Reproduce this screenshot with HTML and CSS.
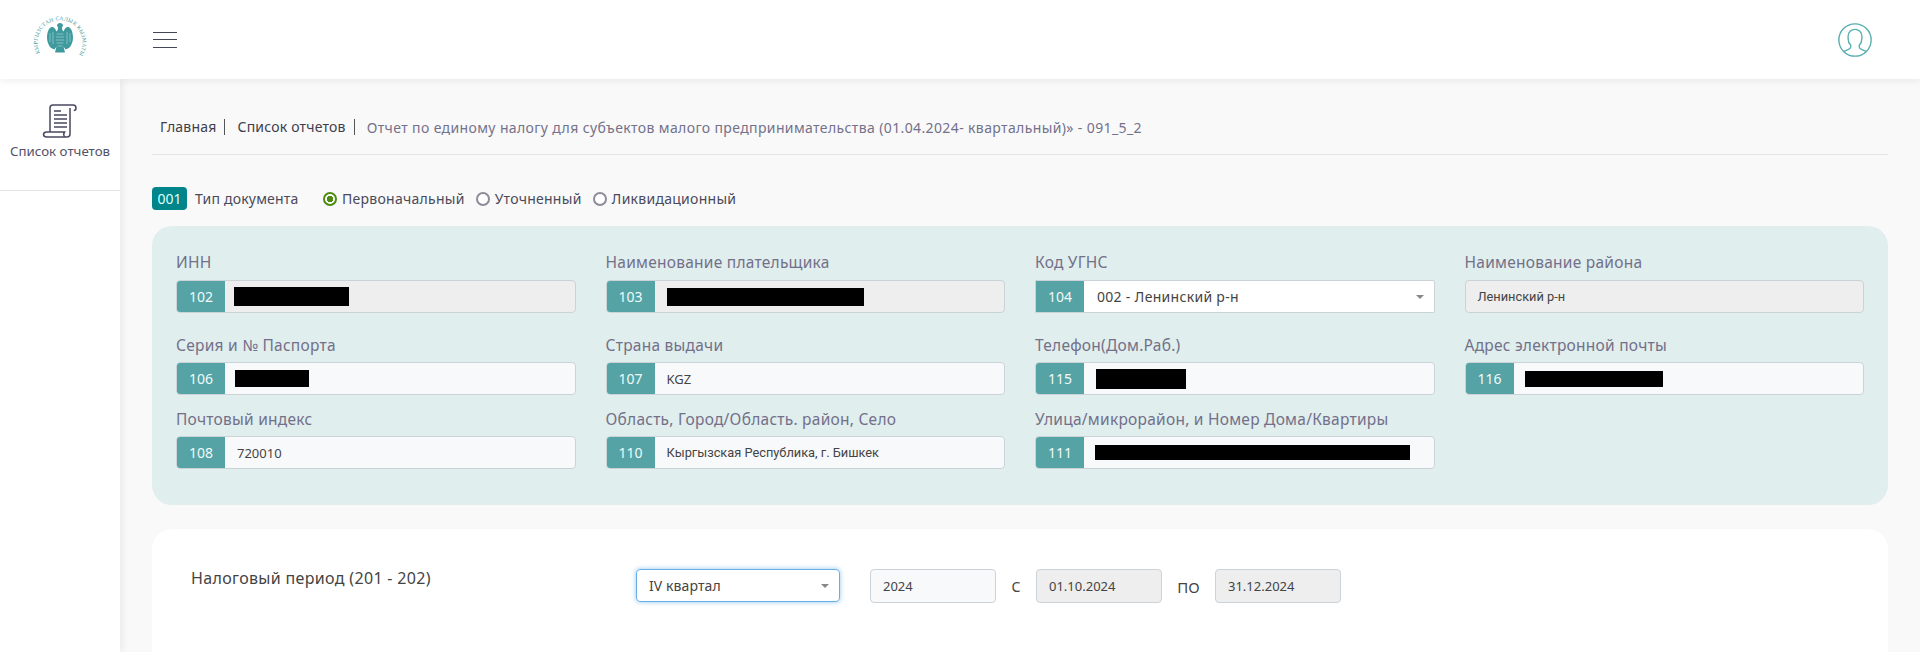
FILE: index.html
```html
<!DOCTYPE html>
<html lang="ru">
<head>
    <meta charset="UTF-8">
    <meta name="viewport" content="width=device-width, initial-scale=1.0">
    <title>Список отчетов</title>
    <link rel="stylesheet" href="styles.css">
</head>
<body>
    <header class="topbar">
        <svg class="logo" viewBox="0 0 60 60" aria-label="Кыргызстан салык кызматы">
            <defs><path id="logo-arc" d="M10 43A22.500 22.500 0 1 1 50 43"/></defs>
            <text class="logo-text"><textPath href="#logo-arc" textLength="94" lengthAdjust="spacing">КЫРГЫЗСТАН САЛЫК КЫЗМАТЫ</textPath></text>
            <path class="logo-eagle" d="M30 13c1.500 0 3 1 3 2.500l-1 2c0 2 .5 3 1.500 4 1-3 3-5 5-4.500 3 1 4.500 6 4.500 11 0 4-2 8-4 10l-3.500 1.500-2-3 1.500 6h-10l1.500-6-2 3-3.500-1.500c-2-2-4-6-4-10 0-5 1.500-10 4.500-11 2-.5 4 1.500 5 4.500 1-1 1.500-2 1.500-4l-1-2c0-1.500 1.500-2.500 3-2.500z"/>
            <path class="logo-lines" d="M26.500 24h7M26 27h8M26 30h8M26.500 33h7M27.500 36h5M20 23v9M23 22v12M37 22v12M40 23v9"/>
        </svg>
        <button class="menu-btn" type="button" aria-label="Меню">
            <span></span><span></span><span></span>
        </button>
        <svg class="user-icon" viewBox="0 0 32 32" aria-label="Профиль">
            <circle cx="16" cy="16" r="15.200"/>
            <path d="M5 27l4.500-2c1.500-.6 2.500-1.200 2.500-2.500V21c-1.500-1.500-2.500-3.500-2.500-6.500v-2c0-4 3-6.500 6.500-6.500s6.500 2.500 6.500 6.500v2c0 3-1 5-2.500 6.500v1.500c0 1.300 1 1.900 2.500 2.500l4.500 2"/>
        </svg>
    </header>

    <div class="layout">
        <aside class="sidebar">
            <a class="side-item" href="#">
                <svg class="scroll-icon" viewBox="0 0 36 36">
                    <path d="M8 29V5a3 3 0 0 1 3-3h20a3 3 0 0 1 3 3c0 1.500-1 2.500-2.200 2.500M29 2h2M28 5v26a3 3 0 0 1-3 3H5c-2 0-3.500-1.200-3.500-2.500S3 29 5 29h17.500c-1 1.500-1 3.500.5 5"/>
                    <path d="M12 8h7M12 12h13M12 16h13M12 20h13M12 24h13"/>
                </svg>
                <span>Список отчетов</span>
            </a>
        </aside>

        <main class="main">
            <nav class="crumbs">
                <a href="#">Главная</a>
                <a href="#">Список отчетов</a>
                <span class="crumb-current">Отчет по единому налогу для субъектов малого предпринимательства (01.04.2024- квартальный)» - 091_5_2</span>
            </nav>

            <div class="doc-type">
                <span class="doc-code">001</span>
                <span class="doc-label">Тип документа</span>
                <label class="radio"><i class="radio-dot checked"></i>Первоначальный</label>
                <label class="radio"><i class="radio-dot"></i>Уточненный</label>
                <label class="radio"><i class="radio-dot"></i>Ликвидационный</label>
            </div>

            <section class="panel">
                <div class="panel-row first">
                    <div class="field">
                        <div class="field-label">ИНН</div>
                        <div class="input-group disabled"><span class="code">102</span><span class="value"><i class="redact r102"></i></span></div>
                    </div>
                    <div class="field">
                        <div class="field-label">Наименование плательщика</div>
                        <div class="input-group disabled"><span class="code">103</span><span class="value"><i class="redact r103"></i></span></div>
                    </div>
                    <div class="field">
                        <div class="field-label">Код УГНС</div>
                        <div class="input-group select"><span class="code">104</span><span class="value wide">002 - Ленинский р-н</span><i class="caret"></i></div>
                    </div>
                    <div class="field">
                        <div class="field-label">Наименование района</div>
                        <div class="input-group disabled"><span class="value small">Ленинский р-н</span></div>
                    </div>
                </div>
                <div class="panel-row">
                    <div class="field">
                        <div class="field-label">Серия и № Паспорта</div>
                        <div class="input-group"><span class="code">106</span><span class="value"><i class="redact r106"></i></span></div>
                    </div>
                    <div class="field">
                        <div class="field-label">Страна выдачи</div>
                        <div class="input-group"><span class="code">107</span><span class="value">KGZ</span></div>
                    </div>
                    <div class="field">
                        <div class="field-label">Телефон(Дом.Раб.)</div>
                        <div class="input-group"><span class="code">115</span><span class="value"><i class="redact r115"></i></span></div>
                    </div>
                    <div class="field">
                        <div class="field-label">Адрес электронной почты</div>
                        <div class="input-group"><span class="code">116</span><span class="value"><i class="redact r116"></i></span></div>
                    </div>
                </div>
                <div class="panel-row">
                    <div class="field">
                        <div class="field-label">Почтовый индекс</div>
                        <div class="input-group"><span class="code">108</span><span class="value">720010</span></div>
                    </div>
                    <div class="field">
                        <div class="field-label">Область, Город/Область. район, Село</div>
                        <div class="input-group"><span class="code">110</span><span class="value small">Кыргызская Республика, г. Бишкек</span></div>
                    </div>
                    <div class="field">
                        <div class="field-label">Улица/микрорайон, и Номер Дома/Квартиры</div>
                        <div class="input-group"><span class="code">111</span><span class="value"><i class="redact r111"></i></span></div>
                    </div>
                </div>
            </section>

            <section class="card">
                <div class="period-label">Налоговый период (201 - 202)</div>
                <div class="period-select"><span>IV квартал</span><i class="caret"></i></div>
                <div class="box year">2024</div>
                <span class="sep">С</span>
                <div class="box locked">01.10.2024</div>
                <span class="sep sep-wide">ПО</span>
                <div class="box locked">31.12.2024</div>
            </section>
        </main>
    </div>
</body>
</html>
```

FILE: styles.css
```css
* {
    box-sizing: border-box;
}
html, body {
    height: 100%;
}
body {
    margin: 0;
    overflow: hidden;
    font-family: "Noto Sans", Arial, sans-serif;
    font-size: 14px;
    background-color: #f9f9f9;
    color: #444;
}
a {
    color: inherit;
    text-decoration: none;
}

/* top bar */
.topbar {
    position: relative;
    z-index: 2;
    display: flex;
    align-items: center;
    height: 79px;
    padding: 0 30px;
    background: #fff;
    box-shadow: 0 2px 8px rgba(0, 0, 0, 0.07);
}
.logo {
    width: 60px;
    height: 60px;
}
.logo-text {
    font-family: "Liberation Serif", serif;
    font-size: 5.6px;
    fill: #3f9a9e;
}
.logo-eagle {
    fill: #3f9a9e;
}
.logo-lines {
    fill: none;
    stroke: #9fd0d1;
    stroke-width: 0.7;
}
.menu-btn {
    display: flex;
    flex-direction: column;
    gap: 6.5px;
    width: 24px;
    margin-left: 63px;
    padding: 0;
    border: 0;
    background: none;
}
.menu-btn span {
    display: block;
    height: 1px;
    background: #444756;
}
.user-icon {
    width: 34px;
    height: 34px;
    margin-left: auto;
    margin-right: 18px;
    fill: none;
    stroke: #58aeb0;
    stroke-width: 1.3;
}

.layout {
    display: flex;
    height: calc(100% - 79px);
}

/* sidebar */
.sidebar {
    position: relative;
    z-index: 1;
    flex: 0 0 120px;
    background: #fff;
    box-shadow: 2px 0 8px rgba(0, 0, 0, 0.07);
}
.side-item {
    display: flex;
    flex-direction: column;
    align-items: center;
    height: 112px;
    padding-top: 24px;
    border-bottom: 1px solid #e2e2e6;
    font-size: 13.3px;
    color: #53516a;
}
.scroll-icon {
    width: 36px;
    height: 36px;
    fill: none;
    stroke: #4a4860;
    stroke-width: 1.500;
}
.side-item span {
    margin-top: 3px;
    white-space: nowrap;
}

/* main column */
.main {
    flex: 1;
    min-width: 0;
    padding: 0 32px;
}
.crumbs {
    display: flex;
    align-items: center;
    height: 76px;
    padding: 21px 0 0 8px;
    border-bottom: 1px solid #e3e3e8;
    font-size: 14px;
    color: #3e3e4c;
}
.crumbs a {
    padding-right: 8px;
    margin-right: 12px;
    line-height: 16px;
    letter-spacing: 0.2px;
    border-right: 1px solid #555;
}
.crumb-current {
    color: #74718a;
    letter-spacing: 0.38px;
}

.doc-type {
    display: flex;
    align-items: center;
    height: 23px;
    margin: 32px 0 16px;
    font-size: 14px;
    color: #4a4a5a;
}
.doc-code {
    width: 35px;
    height: 23px;
    line-height: 23px;
    margin-right: 8px;
    text-align: center;
    border-radius: 4px;
    background: #00868a;
    color: #dff;
}
.doc-label {
    width: 128px;
    letter-spacing: 0.2px;
}
.radio {
    display: flex;
    align-items: center;
    margin-right: 11px;
    letter-spacing: 0.27px;
}
.radio-dot {
    width: 14px;
    height: 14px;
    margin-right: 5px;
    border: 2px solid #8c8c9a;
    border-radius: 50%;
    background: #fff;
}
.radio-dot.checked {
    border-color: #4c8a10;
    background: radial-gradient(circle, #4c8a10 0 3px, #fff 3.5px);
}

/* teal panel */
.panel {
    height: 279px;
    padding: 26px 24px 0;
    border-radius: 20px;
    background: #e0eeed;
}
.panel-row {
    display: grid;
    grid-template-columns: repeat(4, 1fr);
    column-gap: 30px;
    margin-bottom: 14px;
}
.panel-row.first {
    margin-bottom: 22px;
}
.panel-row.first .field-label {
    margin-bottom: 8px;
}
.field-label {
    height: 20px;
    line-height: 20px;
    margin-bottom: 7px;
    font-size: 15.5px;
    letter-spacing: 0.25px;
    color: #73708a;
    white-space: nowrap;
}
.input-group {
    display: flex;
    align-items: center;
    position: relative;
    height: 33px;
    overflow: hidden;
    border: 1px solid #ccd3d8;
    border-radius: 4px;
    background: #f8f9fb;
    font-size: 13px;
    color: #444;
}
.input-group.disabled {
    background: #eee;
}
.input-group.select {
    background: #fff;
    border-radius: 0 2px 2px 0;
}
.code {
    flex: 0 0 48px;
    align-self: stretch;
    line-height: 31px;
    text-align: center;
    background: #55a3a5;
    color: #f0fafa;
    font-size: 14px;
}
.value {
    display: flex;
    align-items: center;
    padding-left: 12px;
    white-space: nowrap;
}
.value.wide {
    padding-left: 13px;
    font-size: 14px;
    letter-spacing: 0.3px;
}
.value.small {
    font-family: Roboto, Arial, sans-serif;
    font-size: 12.8px;
}
.caret {
    position: absolute;
    right: 10px;
    top: 50%;
    margin-top: -2px;
    border-style: solid;
    border-width: 4px 4px 0;
    border-color: #888 transparent transparent;
}

/* blacked out values */
.redact {
    display: block;
    background: #000;
}
.r102 {
    width: 115px;
    height: 19px;
    margin-left: -3px;
}
.r103 {
    width: 197px;
    height: 18px;
}
.r106 {
    width: 74px;
    height: 17px;
    margin-left: -2px;
}
.r115 {
    width: 90px;
    height: 20px;
}
.r116 {
    width: 138px;
    height: 16px;
    margin-left: -1px;
}
.r111 {
    width: 315px;
    height: 15px;
    margin-left: -1px;
}

/* tax period card */
.card {
    display: flex;
    align-items: flex-start;
    height: 200px;
    margin-top: 24px;
    padding: 40px 39px 0;
    border-radius: 20px;
    background: #fff;
    font-size: 14px;
    color: #444;
}
.period-label {
    flex: 0 0 445px;
    line-height: 20px;
    margin-top: -1px;
    font-size: 16px;
    letter-spacing: 0.33px;
}
.period-select {
    display: flex;
    align-items: center;
    justify-content: space-between;
    position: relative;
    width: 204px;
    height: 33px;
    margin-right: 30px;
    padding: 0 12px;
    border: 1px solid #66afe9;
    border-radius: 4px;
    box-shadow: 0 0 5px rgba(102, 175, 233, 0.7);
    font-size: 14px;
    letter-spacing: 0.1px;
}
.box {
    width: 126px;
    height: 34px;
    line-height: 32px;
    padding-left: 12px;
    border: 1px solid #ccd3d8;
    border-radius: 4px;
    font-size: 13px;
}
.box.year {
    background: #f8f9fb;
}
.box.locked {
    background: #eee;
}
.sep {
    width: 40px;
    line-height: 36px;
    text-align: center;
    font-size: 14px;
}
.sep-wide {
    width: 53px;
    font-size: 15px;
}
```
